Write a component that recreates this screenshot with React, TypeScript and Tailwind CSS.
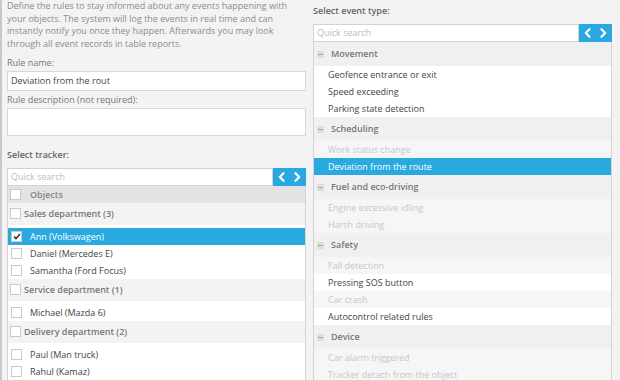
import React from "react"

type Item = { label: string; checked?: boolean; disabled?: boolean; selected?: boolean }
type Group = { name: string; items: Item[] }

const trackers: Group[] = [
  {
    name: "Sales department (3)",
    items: [
      { label: "Ann (Volkswagen)", checked: true, selected: true },
      { label: "Daniel (Mercedes E)" },
      { label: "Samantha (Ford Focus)" },
    ],
  },
  { name: "Service department (1)", items: [{ label: "Michael (Mazda 6)" }] },
  {
    name: "Delivery department (2)",
    items: [{ label: "Paul (Man truck)" }, { label: "Rahul (Kamaz)" }],
  },
]

const events: Group[] = [
  {
    name: "Movement",
    items: [
      { label: "Geofence entrance or exit" },
      { label: "Speed exceeding" },
      { label: "Parking state detection" },
    ],
  },
  {
    name: "Scheduling",
    items: [
      { label: "Work status change", disabled: true },
      { label: "Deviation from the route", selected: true },
    ],
  },
  {
    name: "Fuel and eco-driving",
    items: [
      { label: "Engine excessive idling", disabled: true },
      { label: "Harsh driving", disabled: true },
    ],
  },
  {
    name: "Safety",
    items: [
      { label: "Fall detection", disabled: true },
      { label: "Pressing SOS button" },
      { label: "Car crash", disabled: true },
      { label: "Autocontrol related rules" },
    ],
  },
  {
    name: "Device",
    items: [
      { label: "Car alarm triggered", disabled: true },
      { label: "Tracker detach from the object", disabled: true },
    ],
  },
]

function Chevron({ dir }: { dir: "left" | "right" }) {
  return (
    <svg width="7" height="10" viewBox="0 0 7 10" fill="none">
      <path
        d={dir === "left" ? "M5.5 1.2L1.8 5l3.7 3.8" : "M1.5 1.2L5.2 5 1.5 8.8"}
        stroke="white"
        strokeWidth="2.2"
        strokeLinecap="round"
        strokeLinejoin="round"
      />
    </svg>
  )
}

function SearchBar() {
  return (
    <div className="flex h-[18px]">
      <div className="flex flex-1 items-center border border-[#d3d3d3] bg-white pl-[3px] text-[9px] text-[#bdbdbd]">
        Quick search
      </div>
      <div className="flex w-[33px] items-center justify-center gap-[9px] bg-[#29a9e0]">
        <Chevron dir="left" />
        <Chevron dir="right" />
      </div>
    </div>
  )
}

function Checkbox({ checked }: { checked?: boolean }) {
  return (
    <div className="flex h-[11px] w-[11px] shrink-0 items-center justify-center border border-[#cacaca] bg-white">
      {checked && (
        <svg width="8" height="7" viewBox="0 0 8 7" fill="none">
          <path d="M1 3.6l2 2L7 1" stroke="#333" strokeWidth="1.5" />
        </svg>
      )}
    </div>
  )
}

function Minus() {
  return (
    <div className="flex h-[7px] w-[7px] items-center justify-center rounded-[1px] bg-[#dedede]">
      <div className="h-px w-[5px] bg-[#a8a8a8]" />
    </div>
  )
}

export default function App() {
  return (
    <div className="flex h-[380px] w-[620px] overflow-hidden border-l-2 border-[#c7c7cd] bg-[#f3f3f3] font-['Open_Sans',sans-serif]">
      {/* Left: rule details + trackers */}
      <div className="ml-[5px] flex w-[299px] flex-col">
        <p className="text-[9px] leading-[12.7px] text-[#8c8c8c]">
          Define the rules to stay informed about any events happening with your objects. The system will log the
          events in real time and can instantly notify you once they happen. Afterwards you may look through all
          event records in table reports.
        </p>
        <div className="mt-[5px] h-[13px] text-[9px] leading-[13px] text-[#777]">Rule name:</div>
        <div className="mt-[2px] flex h-[20px] items-center border border-[#d6d6d6] bg-white pl-[3px] text-[9px] text-[#444]">
          Deviation from the rout
        </div>
        <div className="mt-[2px] h-[13px] text-[9px] leading-[13px] text-[#777]">Rule description (not required):</div>
        <div className="mt-[2px] h-[28px] border border-[#d6d6d6] bg-white" />

        <div className="mt-[12px] h-[13px] text-[9px] font-semibold leading-[13px] text-[#666]">Select tracker:</div>
        <div className="mt-[7px]">
          <SearchBar />
        </div>
        <div className="flex-1 border-x border-[#d3d3d3] bg-white">
          <div className="flex h-[17px] items-center bg-[#e3e3e3] pl-[2px] text-[9px] font-semibold text-[#888]">
            <Checkbox />
            <span className="ml-[9px]">Objects</span>
          </div>
          {trackers.map((g) => (
            <div key={g.name}>
              <div className="flex h-[22px] items-center bg-[#f3f3f3] pl-[2px] text-[9px] font-semibold text-[#777]">
                <Checkbox />
                <span className="ml-[3px]">{g.name}</span>
              </div>
              <div className="pt-[3px]">
                {g.items.map((it) => (
                  <div
                    key={it.label}
                    className={
                      it.selected
                        ? "flex h-[17px] items-center bg-[#29a9e0] pl-[3px] text-[9px] text-white"
                        : "flex h-[17px] items-center pl-[3px] text-[9px] text-[#444]"
                    }
                  >
                    <Checkbox checked={it.checked} />
                    <span className="ml-[8px]">{it.label}</span>
                  </div>
                ))}
              </div>
            </div>
          ))}
        </div>
      </div>

      {/* Right: event types */}
      <div className="ml-[7px] flex w-[299px] flex-col">
        <div className="mt-[4px] h-[13px] text-[9px] font-semibold leading-[13px] text-[#666]">Select event type:</div>
        <div className="mt-[7px]">
          <SearchBar />
        </div>
        <div className="flex-1 border-x border-[#d3d3d3] bg-white">
          {events.map((g) => (
            <div key={g.name}>
              <div className="flex h-[24px] items-center bg-[#f0f0f0] pl-[3px] text-[9px] font-semibold text-[#777]">
                <Minus />
                <span className="ml-[7px]">{g.name}</span>
              </div>
              {g.items.map((it) => (
                <div
                  key={it.label}
                  className={
                    it.selected
                      ? "flex h-[17px] items-center bg-[#29a9e0] pl-[14px] text-[9px] text-white"
                      : it.disabled
                        ? "flex h-[17px] items-center bg-[#f6f6f6] pl-[14px] text-[9px] text-[#c6c6c6]"
                        : "flex h-[17px] items-center bg-white pl-[14px] text-[9px] text-[#444]"
                  }
                >
                  {it.label}
                </div>
              ))}
            </div>
          ))}
        </div>
      </div>
    </div>
  )
}
